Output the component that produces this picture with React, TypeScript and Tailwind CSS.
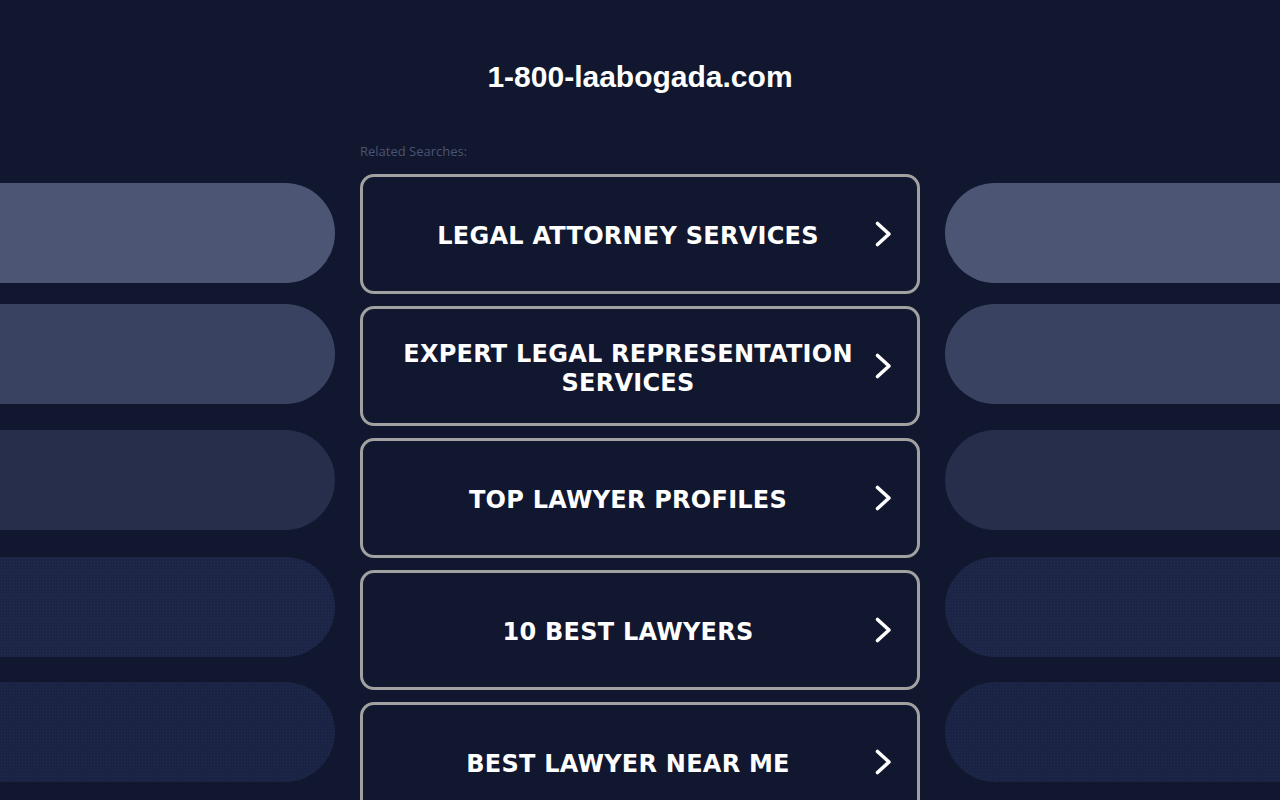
import React from 'react';

// related search links shown in the centre column
const searches: string[] = [
  'Legal Attorney Services',
  'Expert Legal Representation Services',
  'Top Lawyer Profiles',
  '10 Best Lawyers',
  'Best Lawyer Near Me',
];

// decorative side pills: top gap + fill
const pills = [
  { gap: 'mt-[183px]', fill: 'bg-[#4c5674]' },
  { gap: 'mt-[21px]', fill: 'bg-[#3a4261]' },
  { gap: 'mt-[26px]', fill: 'bg-[#262e4c]' },
  { gap: 'mt-[27px]', fill: 'bg-[#1c2546] bg-[radial-gradient(#222e52_1px,transparent_1px)] bg-[length:3px_3px]' },
  { gap: 'mt-[25px]', fill: 'bg-[#1a2343] bg-[radial-gradient(#202c4f_1px,transparent_1px)] bg-[length:3px_3px]' },
];

const Chevron: React.FC = () => (
  <svg width="20" height="28" viewBox="0 0 20 28" fill="none" className="shrink-0">
    <polyline
      points="4.5,3.5 16,14 4.5,24.5"
      stroke="#ffffff"
      strokeWidth="3.6"
      strokeLinecap="round"
      strokeLinejoin="round"
    />
  </svg>
);

const SidePills: React.FC<{ side: 'left' | 'right' }> = ({ side }) => (
  <div className="flex flex-col">
    {pills.map((p, i) => (
      <div
        key={i}
        className={`${p.gap} ${p.fill} h-[100px] ${side === 'left' ? 'rounded-r-full' : 'rounded-l-full'}`}
      />
    ))}
  </div>
);

const App: React.FC = () => {
  return (
    <div className="min-h-screen h-[800px] overflow-hidden bg-[#11172e]">
      <div className="grid grid-cols-[335px_1fr_335px]">
        <SidePills side="left" />

        <main className="flex flex-col items-center">
          <h1 className="pt-[58px] text-[30px] leading-[38px] font-bold text-white font-['Liberation_Sans',Arial,sans-serif]">
            1-800-laabogada.com
          </h1>

          <div className="w-[560px] mt-[46px]">
            <p className="text-[13px] leading-[18px] text-[#4a5473] font-['Open_Sans',Arial,sans-serif]">
              Related Searches:
            </p>

            <div className="mt-[14px] flex flex-col gap-[12px]">
              {searches.map((s) => (
                <a
                  key={s}
                  href="#"
                  className="h-[120px] flex items-center gap-1 pl-6 pr-6 rounded-[14px] border-[3px] border-[#a1a1a1] bg-[#11172e]"
                >
                  <span className="flex-1 pt-[5px] text-center uppercase text-white font-bold text-[24px] leading-[29px] tracking-[0.25px] font-['DejaVu_Sans',Verdana,sans-serif]">
                    {s}
                  </span>
                  <Chevron />
                </a>
              ))}
            </div>
          </div>
        </main>

        <SidePills side="right" />
      </div>
    </div>
  );
};

export default App;
